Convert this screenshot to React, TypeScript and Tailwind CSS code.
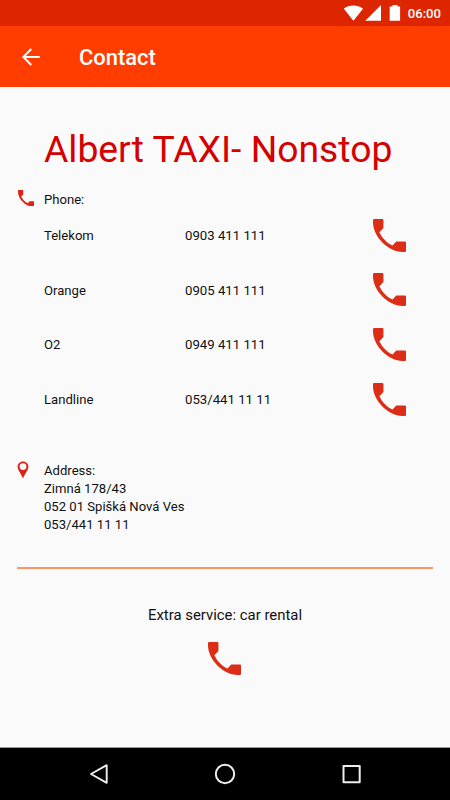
const phones = [
  { label: 'Telekom', number: '0903 411 111' },
  { label: 'Orange', number: '0905 411 111' },
  { label: 'O2', number: '0949 411 111' },
  { label: 'Landline', number: '053/441 11 11' },
];

const PhoneIcon = ({ className }: { className: string }) => (
  <svg className={className} viewBox="0 0 98 98" fill="currentColor">
    <path d="M4 0H28Q31 0 31 3V27L19 39C27 56 41 71 58 79L69 67H95Q98 67 98 70V95Q98 98 95 98H88C45 98 0 53 0 10V4Q0 0 4 0Z" />
  </svg>
);

const StatusBar = () => (
  <div className="flex h-[26px] shrink-0 items-center justify-end bg-[#dd2600] pr-[9px] text-white">
    <svg className="mr-px h-[26px] w-[64px]" viewBox="0 0 64 26" fill="currentColor">
      <path d="M.8 8.7C6 4.500 14.500 4.500 20 8.700L10.400 20.700Z" />
      <path d="M38 5V20.700H22.300Z" />
      <path d="M46.700 6.500H49.500V5H54.500V6.500H57.100V20.700H46.700Z" />
    </svg>
    <span className="pt-px text-[13.1px] leading-[26px] font-medium">06:00</span>
  </div>
);

const AppBar = () => (
  <header className="flex h-[61px] shrink-0 items-center bg-[#ff3d00] pl-[22px] text-white">
    <svg className="h-[18px] w-[18px]" viewBox="0 0 18 18" fill="none" stroke="currentColor" strokeWidth="2">
      <path d="M17.800 9H1.500M9.300 1L1.300 9L9.300 17" />
    </svg>
    <h1 className="ml-[39px] pt-[2px] text-[21.9px] leading-[26px] font-medium">Contact</h1>
  </header>
);

const NavBar = () => (
  <nav className="flex h-[53px] shrink-0 items-center justify-between border-t border-[#999] bg-black pr-[88px] pl-[89px] text-[#eee]">
    <svg className="h-[22px] w-[20px]" viewBox="0 0 20 22" fill="none" stroke="currentColor" strokeWidth="1.9" strokeLinejoin="round">
      <path d="M17.700 2.200V19.800L2 11Z" />
    </svg>
    <svg className="h-[22px] w-[22px]" viewBox="0 0 22 22" fill="none" stroke="currentColor" strokeWidth="2">
      <circle cx="11" cy="11" r="9.200" />
    </svg>
    <svg className="h-[22px] w-[22px]" viewBox="0 0 22 22" fill="none" stroke="currentColor" strokeWidth="2" strokeLinejoin="round">
      <path d="M3.500 3H19.700V19.200H3.500Z" />
    </svg>
  </nav>
);

const App = () => {
  return (
    <div className="flex h-[800px] w-[450px] flex-col bg-[#fafafa] font-['Roboto',sans-serif] text-[#111]">
      <StatusBar />
      <AppBar />

      <main className="flex min-h-0 flex-1 flex-col pt-[40px]">
        <h2 className="pl-[44px] text-[37.3px] leading-[45px] whitespace-nowrap text-[#d50000]">
          Albert TAXI- Nonstop
        </h2>

        {/* Phone numbers */}
        <section className="mt-[15px]">
          <div className="flex h-[22px] items-center pl-[17.500px]">
            <PhoneIcon className="size-[16.500px] text-[#dd2115]" />
            <span className="ml-[10px] pt-[3px] text-[13.1px] leading-[18px]">Phone:</span>
          </div>
          {phones.map((phone) => (
            <div key={phone.label} className="flex h-[54.600px] items-center pl-[44px] text-[13.1px] leading-[18px]">
              <span className="w-[141px]">{phone.label}</span>
              <span className="w-[188px] text-[13.2px]">{phone.number}</span>
              <PhoneIcon className="mb-[2px] size-[33px] text-[#dc2d17]" />
            </div>
          ))}
        </section>

        {/* Address */}
        <section className="mt-[34px] flex h-[76px] pl-[17px] text-[13.1px] leading-[18px]">
          <svg className="h-[18px] w-[12px]" viewBox="0 0 12 18" fill="#dd2115" fillRule="evenodd">
            <path d="M6 .4C2.900.4.6 2.800.6 5.700C.6 9 4 12.500 6 17.500C8 12.500 11.400 9 11.400 5.700C11.400 2.800 9.100.4 6 .4ZM6 2.200A3.400 3.400 0 1 1 6 9A3.400 3.400 0 1 1 6 2.200Z" />
          </svg>
          <div className="ml-[15px] pt-px">
            <p>Address:</p>
            <p>Zimná 178/43</p>
            <p>052 01 Spišká Nová Ves</p>
            <p>053/441 11 11</p>
          </div>
        </section>

        <div className="mx-[17px] mt-[30px] h-[2px] shrink-0 bg-[#ff9464]" />

        <section className="flex flex-col items-center pt-[36px]">
          <p className="text-[14.900px] leading-[20px]">Extra service: car rental</p>
          <PhoneIcon className="mt-[17px] mr-px size-[33px] text-[#dc2d17]" />
        </section>
      </main>

      <NavBar />
    </div>
  );
};

export default App;
